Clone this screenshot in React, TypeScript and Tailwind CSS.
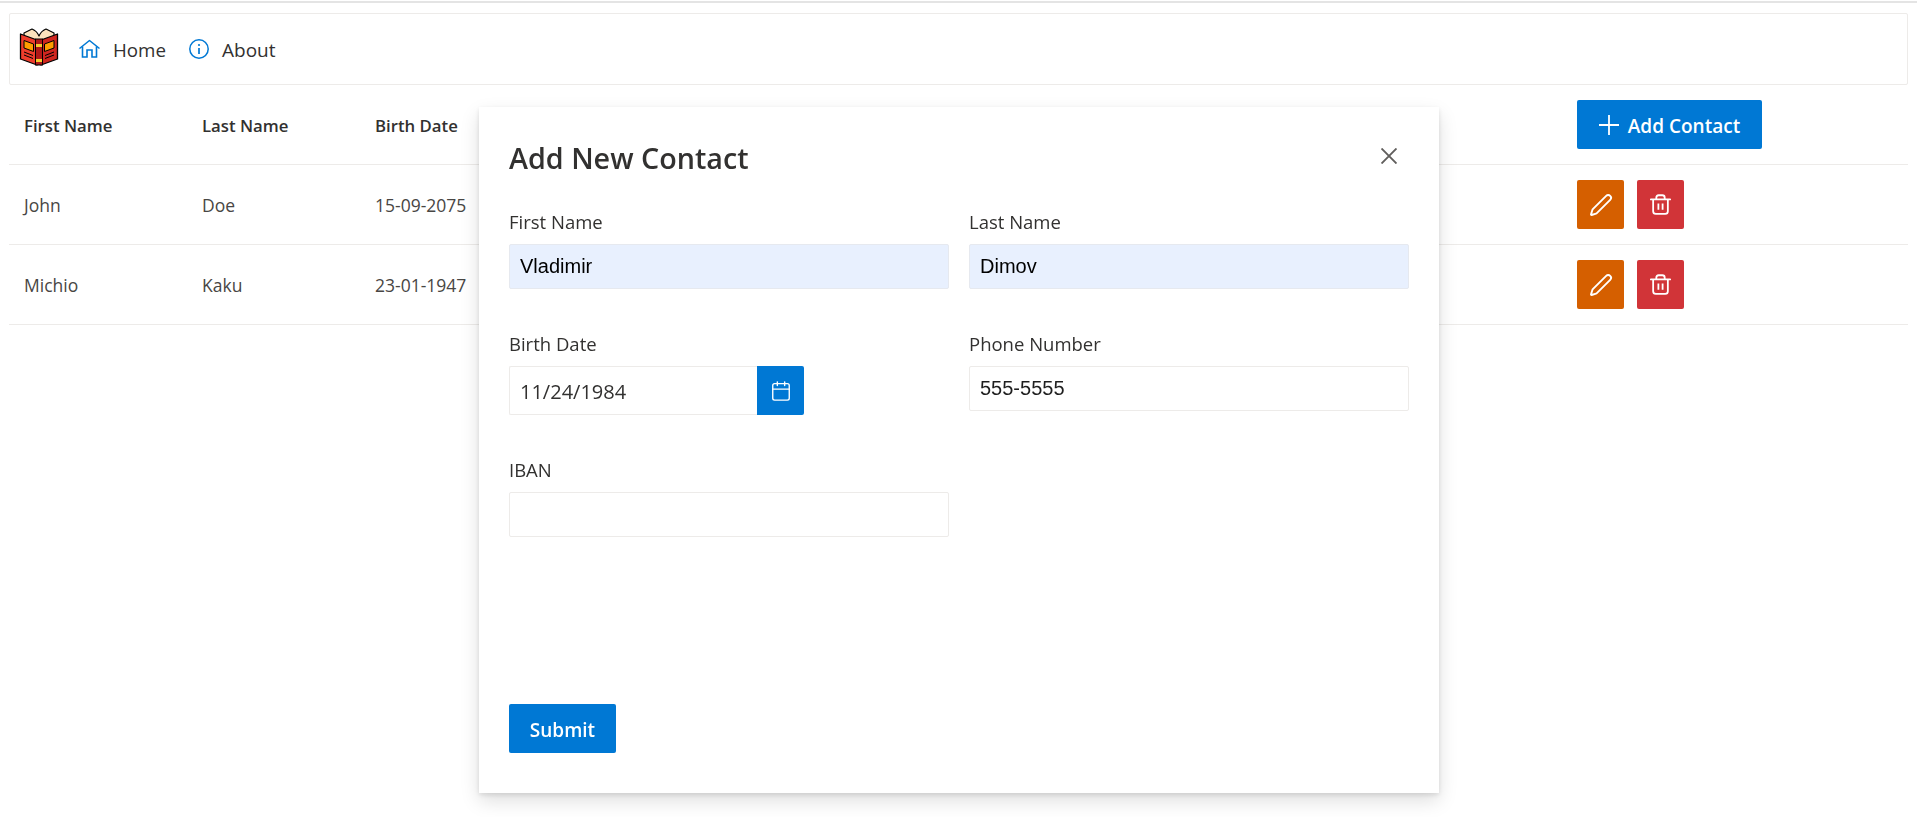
import React from "react";
import { Calendar, Pen } from "lucide-react";

const BLUE = "bg-[#0078d4]";

// ── Icons ────────────────────────────────────────────────────

function BookLogo() {
  return (
    <svg width="40" height="38" viewBox="0 0 40 38" className="mb-[4px] ml-[-1px] shrink-0">
      <path d="M5 5 L13 1 Q18 3 20 8 Q22 3 27 1 L35 5 L35 12 L5 12 Z" fill="#fbe3bd" stroke="#000" strokeWidth="1.2" strokeLinejoin="round" />
      <path d="M1.5 6 L18 12 V37 L1.5 31 Z" fill="#ee3d2c" stroke="#000" strokeWidth="1.3" strokeLinejoin="round" />
      <path d="M38.5 6 L22 12 V37 L38.5 31 Z" fill="#d0261f" stroke="#000" strokeWidth="1.3" strokeLinejoin="round" />
      <rect x="16.5" y="11" width="7" height="26" fill="#b01818" stroke="#000" strokeWidth="1" />
      <rect x="17" y="16" width="6" height="3" fill="#f6c92d" />
      <rect x="17" y="31" width="6" height="3" fill="#f6c92d" />
      <path d="M5 12.5 L14.5 16 V23.5 L5 20 Z" fill="#ff9d00" stroke="#000" strokeWidth="1" />
      <path d="M35 12.5 L25.5 16 V23.5 L35 20 Z" fill="#ff9d00" stroke="#000" strokeWidth="1" />
      <path d="M5 24 L14 27.5 M5 27 L14 30.5 M35 24 L26 27.5 M35 27 L26 30.5" stroke="#000" strokeWidth="1" />
    </svg>
  );
}

function HomeIcon() {
  return (
    <svg width="21" height="20" viewBox="0 0 21 20" fill="none" stroke="#0078d4" strokeWidth="1.6" className="shrink-0">
      <path d="M0.5 9.5 L10.5 1.5 L20.5 9.5" strokeLinejoin="round" />
      <path d="M3.5 7.5 V18 H8 V11 H13 V18 H17.5 V7.5" />
    </svg>
  );
}

function InfoIcon() {
  return (
    <svg width="20" height="20" viewBox="0 0 20 20" fill="none" className="shrink-0">
      <circle cx="10" cy="10" r="9.2" stroke="#0078d4" strokeWidth="1.5" />
      <circle cx="10" cy="6" r="1.1" fill="#0078d4" />
      <path d="M10 9 V15" stroke="#0078d4" strokeWidth="1.7" />
    </svg>
  );
}

function TrashIcon() {
  return (
    <svg width="21" height="21" viewBox="0 0 20 20" fill="none" stroke="#fff" strokeWidth="1.7" strokeLinejoin="round">
      <path d="M0.8 5.2 H19.2" strokeLinecap="round" />
      <path d="M6 5 V3.5 Q6 1.2 8.2 1.2 H11.8 Q14 1.2 14 3.5 V5" />
      <path d="M3 5.2 V16.5 Q3 19 5.5 19 H14.5 Q17 19 17 16.5 V5.2" />
      <path d="M8 9 V15 M12 9 V15" />
    </svg>
  );
}

function PlusIcon() {
  return (
    <svg width="20" height="20" viewBox="0 0 20 20" stroke="#fff" strokeWidth="1.8" className="shrink-0">
      <path d="M0 10 H20 M10 0 V20" />
    </svg>
  );
}

function CloseIcon() {
  return (
    <svg width="16" height="16" viewBox="0 0 16 16" stroke="#605e5c" strokeWidth="1.9" className="shrink-0">
      <path d="M0.5 0.5 L15.5 15.5 M15.5 0.5 L0.5 15.5" />
    </svg>
  );
}

// ── Page parts ───────────────────────────────────────────────

const rows = [
  { first: "John", last: "Doe", birth: "15-09-2075" },
  { first: "Michio", last: "Kaku", birth: "23-01-1947" },
];

function Field({ label, value, autofilled }: { label: string; value?: string; autofilled?: boolean }) {
  return (
    <div className="flex flex-col">
      <div className="h-[34px] text-[18.5px] leading-[24px] text-[#323130]">{label}</div>
      <div
        className={`flex h-[45px] items-center rounded-[2px] border px-[10px] pb-[2px] font-['Liberation_Sans',sans-serif] text-[20px] ${
          autofilled ? "border-[#e6e9ef] bg-[#e8f0fe] text-black" : "border-[#edebe9] bg-white text-[#1f1f1f]"
        }`}
      >
        {value}
      </div>
    </div>
  );
}

function AddContactModal() {
  return (
    <div className="fixed left-[479px] top-[107px] flex h-[686px] w-[960px] flex-col bg-white px-[30px] pb-[40px] pt-[22px] shadow-[0_8px_18px_rgba(0,0,0,0.13),0_2px_5px_rgba(0,0,0,0.11)]">
      <div className="flex h-[50px] items-center justify-between">
        <h2 className="pt-[8px] text-[28.7px] font-semibold leading-[50px] text-[#323130]">Add New Contact</h2>
        <div className="mr-[12px] pt-[4px]">
          <CloseIcon />
        </div>
      </div>
      <div className="mt-[31px] grid grid-cols-2 gap-x-5">
        <Field label="First Name" value="Vladimir" autofilled />
        <Field label="Last Name" value="Dimov" autofilled />
      </div>
      <div className="mt-[43px] grid grid-cols-2 gap-x-5">
        <div className="flex flex-col">
          <div className="h-[34px] text-[18.5px] leading-[24px] text-[#323130]">Birth Date</div>
          <div className="flex h-[49px] w-[295px]">
            <div className="flex w-[248px] items-center rounded-l-[2px] border border-r-0 border-[#edebe9] px-[10px] pt-[2px] text-[20px] text-[#323130]">
              11/24/1984
            </div>
            <div className={`flex w-[47px] items-center justify-center rounded-r-[2px] ${BLUE}`}>
              <Calendar size={22} strokeWidth={1.5} className="text-white" />
            </div>
          </div>
        </div>
        <Field label="Phone Number" value="555-5555" />
      </div>
      <div className="mt-[43px] grid grid-cols-2 gap-x-5">
        <Field label="IBAN" />
      </div>
      <button className={`mt-auto h-[49px] w-[107px] rounded-[2px] pt-[4px] text-[19px] font-semibold text-white ${BLUE}`}>
        Submit
      </button>
    </div>
  );
}

// ── App ──────────────────────────────────────────────────────

export default function App() {
  return (
    <div className="min-h-[817px] bg-white font-['Open_Sans',sans-serif] text-[#323130]">
      <div className="h-[3px] border-b-2 border-[#e4e4e4]" />
      <div className="px-[9px] pt-[10px]">
        <nav className="flex h-[72px] items-center rounded-[2px] border border-[#edebe9] pl-[10px]">
          <BookLogo />
          <div className="ml-[20px] flex items-center gap-[13px]">
            <HomeIcon />
            <span className="pt-[2px] text-[18.75px]">Home</span>
          </div>
          <div className="ml-[23px] flex items-center gap-[13px]">
            <InfoIcon />
            <span className="pt-[2px] text-[19px]">About</span>
          </div>
        </nav>

        <div className="grid h-[80px] grid-cols-[178px_173px_1202px_1fr] items-center border-b border-[#edebe9] pl-[15px] text-[16.75px] font-semibold">
          <div className="pt-[2px]">First Name</div>
          <div className="pt-[2px]">Last Name</div>
          <div className="pt-[2px]">Birth Date</div>
          <button className={`flex h-[49px] w-[185px] items-center justify-center gap-[9px] rounded-[2px] text-[19px] text-white ${BLUE}`}>
            <PlusIcon />
            <span className="pt-[4px]">Add Contact</span>
          </button>
        </div>

        {rows.map((row) => (
          <div
            key={row.first}
            className="grid h-[80px] grid-cols-[178px_173px_1202px_1fr] items-center border-b border-[#edebe9] pl-[15px] text-[17.5px] text-[#484644]"
          >
            <div className="pt-[2px]">{row.first}</div>
            <div className="pt-[2px]">{row.last}</div>
            <div className="pt-[2px]">{row.birth}</div>
            <div className="flex gap-[13px]">
              <button className="flex h-[49px] w-[47px] items-center justify-center rounded-[2px] bg-[#d55f00]">
                <Pen size={24} strokeWidth={1.9} className="text-white" />
              </button>
              <button className="flex h-[49px] w-[47px] items-center justify-center rounded-[2px] bg-[#d13438]">
                <TrashIcon />
              </button>
            </div>
          </div>
        ))}
      </div>
      <AddContactModal />
    </div>
  );
}
